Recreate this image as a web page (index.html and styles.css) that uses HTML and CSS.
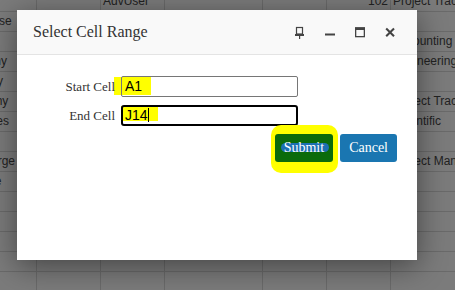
FILE: index.html
```html
<!DOCTYPE html>
<html>
<head>
<meta charset="utf-8">
<title>Select Cell Range</title>
<link rel="stylesheet" href="styles.css">
</head>
<body>
<div class="sheet">
  <div class="row"><div class="c c0"></div><div class="c c1"></div><div class="c c2">AdvUser</div><div class="c c3"></div><div class="c c4"></div><div class="c c5 num">102</div><div class="c c6">Project Tracking</div><div class="c c7"></div></div>
  <div class="row"><div class="c c0">Enterprise</div><div class="c c1"></div><div class="c c2"></div><div class="c c3"></div><div class="c c4"></div><div class="c c5"></div><div class="c c6"></div><div class="c c7"></div></div>
  <div class="row"><div class="c c0"></div><div class="c c1"></div><div class="c c2"></div><div class="c c3"></div><div class="c c4"></div><div class="c c5"></div><div class="c c6">Accounting</div><div class="c c7"></div></div>
  <div class="row"><div class="c c0">Academy</div><div class="c c1"></div><div class="c c2"></div><div class="c c3"></div><div class="c c4"></div><div class="c c5"></div><div class="c c6">Engineering</div><div class="c c7"></div></div>
  <div class="row"><div class="c c0">Advisory</div><div class="c c1"></div><div class="c c2"></div><div class="c c3"></div><div class="c c4"></div><div class="c c5"></div><div class="c c6"></div><div class="c c7"></div></div>
  <div class="row"><div class="c c0">Company</div><div class="c c1"></div><div class="c c2"></div><div class="c c3"></div><div class="c c4"></div><div class="c c5"></div><div class="c c6">Project Tracking</div><div class="c c7"></div></div>
  <div class="row"><div class="c c0">Industries</div><div class="c c1"></div><div class="c c2"></div><div class="c c3"></div><div class="c c4"></div><div class="c c5"></div><div class="c c6">Scientific</div><div class="c c7"></div></div>
  <div class="row"><div class="c c0"></div><div class="c c1"></div><div class="c c2"></div><div class="c c3"></div><div class="c c4"></div><div class="c c5"></div><div class="c c6"></div><div class="c c7"></div></div>
  <div class="row"><div class="c c0">Very Large</div><div class="c c1"></div><div class="c c2"></div><div class="c c3"></div><div class="c c4"></div><div class="c c5"></div><div class="c c6">Project Management</div><div class="c c7"></div></div>
  <div class="row"><div class="c c0">Average</div><div class="c c1"></div><div class="c c2"></div><div class="c c3"></div><div class="c c4"></div><div class="c c5"></div><div class="c c6"></div><div class="c c7"></div></div>
  <div class="row"><div class="c c0"></div><div class="c c1"></div><div class="c c2"></div><div class="c c3"></div><div class="c c4"></div><div class="c c5"></div><div class="c c6"></div><div class="c c7"></div></div>
  <div class="row"><div class="c c0"></div><div class="c c1"></div><div class="c c2"></div><div class="c c3"></div><div class="c c4"></div><div class="c c5"></div><div class="c c6"></div><div class="c c7"></div></div>
  <div class="row"><div class="c c0"></div><div class="c c1"></div><div class="c c2"></div><div class="c c3"></div><div class="c c4"></div><div class="c c5"></div><div class="c c6"></div><div class="c c7"></div></div>
  <div class="row"><div class="c c0"></div><div class="c c1"></div><div class="c c2"></div><div class="c c3"></div><div class="c c4"></div><div class="c c5"></div><div class="c c6"></div><div class="c c7"></div></div>
  <div class="row"><div class="c c0"></div><div class="c c1"></div><div class="c c2"></div><div class="c c3"></div><div class="c c4"></div><div class="c c5"></div><div class="c c6"></div><div class="c c7"></div></div>
</div>

<div class="dialog">
  <div class="dlg-head">
    <span class="dlg-title">Select Cell Range</span>
    <div class="dlg-tools">
      <span class="tool" title="Pin">
        <svg width="12" height="13" viewBox="0 0 12 13"><rect x="2.5" y="1.5" width="6" height="6.5" fill="none" stroke="#444" stroke-width="1.2"/><rect x="1" y="8" width="9" height="2" fill="#444"/><rect x="5" y="10" width="1.2" height="3" fill="#444"/></svg>
      </span>
      <span class="tool" title="Minimize">
        <svg width="12" height="13" viewBox="0 0 12 13"><rect x="1" y="7.5" width="10" height="2" fill="#444"/></svg>
      </span>
      <span class="tool" title="Maximize">
        <svg width="12" height="13" viewBox="0 0 12 13"><rect x="1.65" y="2" width="8.7" height="8.65" fill="none" stroke="#444" stroke-width="1.3"/><rect x="1" y="1.3" width="10" height="2.7" fill="#444"/></svg>
      </span>
      <span class="tool" title="Close">
        <svg width="12" height="13" viewBox="0 0 12 13"><path d="M2.2 2.6 L10 10.2 M10 2.6 L2.2 10.2" stroke="#444" stroke-width="2.1" fill="none"/></svg>
      </span>
    </div>
  </div>
  <div class="dlg-body">
    <div class="form">
      <label class="lbl">Start Cell</label>
      <div class="field"><span class="hl hl-start"></span>A1</div>
      <label class="lbl">End Cell</label>
      <div class="field focus"><span class="hl hl-end"></span>J14<span class="caret"></span></div>
    </div>
    <div class="actions">
      <span class="btn-wrap"><span class="mark"></span><button class="btn submit"><span class="scribble">Submit</span></button></span>
      <button class="btn cancel">Cancel</button>
    </div>
  </div>
</div>
</body>
</html>
```

FILE: styles.css
```css
html, body {
  margin: 0;
  padding: 0;
}

body {
  width: 455px;
  height: 290px;
  overflow: hidden;
  position: relative;
  background: #7b7b7b;
  font-family: "Liberation Sans", Arial, sans-serif;
}

.sheet {
  margin: -8px 0 0 -45px;
  width: 656px;
}

.row {
  display: flex;
  height: 20px;
}

.c {
  flex: none;
  box-sizing: border-box;
  height: 20px;
  border-right: 1px solid #6a6a6a;
  border-bottom: 1px solid #6a6a6a;
  font-size: 12px;
  line-height: 19px;
  color: #222;
  padding: 0 2px;
  white-space: nowrap;
  overflow: hidden;
}

.c0 { width: 82px; }
.c1 { width: 64px; }
.c2 { width: 64px; }
.c3 { width: 98px; }
.c4 { width: 64px; }
.c5 { width: 64px; }
.c6 { width: 120px; }
.c7 { width: 100px; }

.num { text-align: right; }

.dialog {
  position: absolute;
  left: 17px;
  top: 10px;
  width: 400px;
  height: 250px;
  background: #fff;
  box-shadow: 0 6px 28px rgba(0, 0, 0, 0.45);
  z-index: 1;
  font-family: "Liberation Serif", "Times New Roman", serif;
}

.dlg-head {
  display: flex;
  align-items: center;
  height: 44px;
  padding: 0 12px 0 16px;
  background: #f9f9f9;
  border-bottom: 1px solid #e4e4e4;
}

.dlg-title {
  flex: 1;
  font-size: 16px;
  color: #333;
}

.dlg-tools {
  display: flex;
}

.tool {
  width: 30px;
  height: 13px;
  display: flex;
  justify-content: center;
}

.tool svg {
  display: block;
}

.form {
  display: grid;
  grid-template-columns: 82px 177px;
  column-gap: 6px;
  row-gap: 8px;
  align-items: center;
  padding: 21px 0 0 16px;
}

.lbl {
  text-align: right;
  font-size: 13px;
  color: #333;
}

.field {
  position: relative;
  box-sizing: border-box;
  height: 21px;
  border: 1px solid #767676;
  border-radius: 2px;
  padding-left: 3px;
  font-family: "Liberation Sans", Arial, sans-serif;
  font-size: 14px;
  line-height: 19px;
  color: #000;
}

.field.focus {
  border: 2px solid #000;
  border-radius: 3px;
  padding-left: 2px;
  line-height: 17px;
}

.hl {
  position: absolute;
  background: #ffff00;
  z-index: -1;
}

.hl-start {
  left: -8px;
  top: 0;
  width: 37px;
  height: 18px;
}

.hl-end {
  left: -2px;
  top: -1px;
  width: 37px;
  height: 15px;
}

.caret {
  display: inline-block;
  width: 1px;
  height: 14px;
  background: #000;
  vertical-align: -2px;
}

.actions {
  display: flex;
  justify-content: flex-end;
  gap: 7px;
  padding: 8px 20px 0 0;
}

.btn-wrap {
  position: relative;
  display: flex;
}

.mark {
  position: absolute;
  left: -4px;
  right: -5px;
  top: -9px;
  bottom: -11px;
  background: #ffff00;
  border-radius: 10px;
}

.btn {
  height: 28px;
  padding: 0 9px;
  border: 0;
  border-radius: 3px;
  font-family: "Liberation Serif", "Times New Roman", serif;
  font-size: 14px;
  color: #fff;
}

.submit {
  position: relative;
  z-index: 0;
  background: #0b6b0b;
}

.cancel {
  background: #1a76b1;
}

.scribble {
  position: relative;
}

.scribble::before {
  content: "";
  position: absolute;
  left: -3px;
  right: -5px;
  top: 3px;
  height: 9px;
  background: #1d70b2;
  border-radius: 5px;
  z-index: -1;
}
```
